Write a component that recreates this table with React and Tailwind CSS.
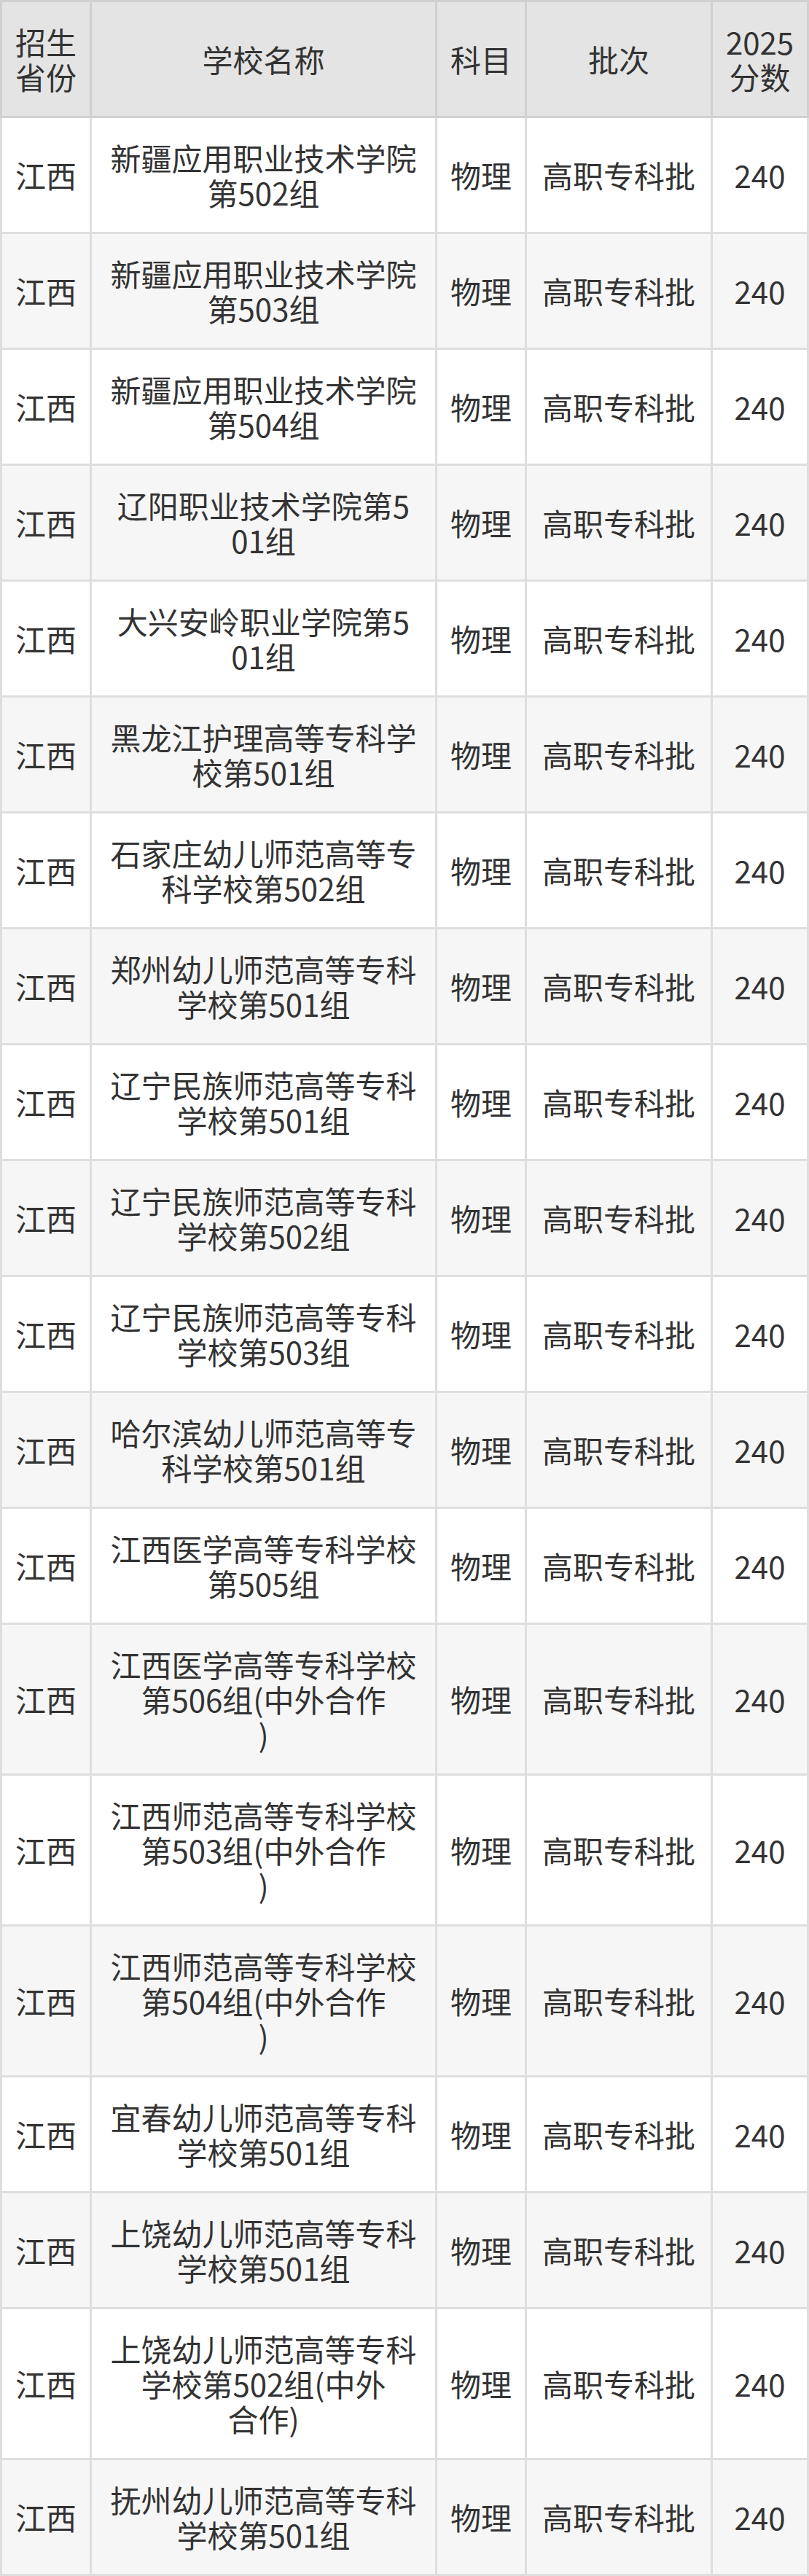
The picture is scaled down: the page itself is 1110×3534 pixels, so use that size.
import React from "react";

// Each school name is split the way it wraps in the narrow column.
const rows = [
  ["新疆应用职业技术学院", "第502组"],
  ["新疆应用职业技术学院", "第503组"],
  ["新疆应用职业技术学院", "第504组"],
  ["辽阳职业技术学院第5", "01组"],
  ["大兴安岭职业学院第5", "01组"],
  ["黑龙江护理高等专科学", "校第501组"],
  ["石家庄幼儿师范高等专", "科学校第502组"],
  ["郑州幼儿师范高等专科", "学校第501组"],
  ["辽宁民族师范高等专科", "学校第501组"],
  ["辽宁民族师范高等专科", "学校第502组"],
  ["辽宁民族师范高等专科", "学校第503组"],
  ["哈尔滨幼儿师范高等专", "科学校第501组"],
  ["江西医学高等专科学校", "第505组"],
  ["江西医学高等专科学校", "第506组(中外合作", ")"],
  ["江西师范高等专科学校", "第503组(中外合作", ")"],
  ["江西师范高等专科学校", "第504组(中外合作", ")"],
  ["宜春幼儿师范高等专科", "学校第501组"],
  ["上饶幼儿师范高等专科", "学校第501组"],
  ["上饶幼儿师范高等专科", "学校第502组(中外", "合作)"],
  ["抚州幼儿师范高等专科", "学校第501组"],
];

const cols = "grid grid-cols-[120px_471px_120px_252px_129px] gap-[3px]";

function Cell({ lines, bg }) {
  return (
    <div
      className={`flex flex-col items-center justify-center whitespace-nowrap py-[30px] text-center ${bg}`}
    >
      {lines.map((l, i) => (
        <div key={i} className="h-[48px]">
          {l}
        </div>
      ))}
    </div>
  );
}

export default function App() {
  return (
    <div className="w-[1110px] bg-white font-['Noto_Sans_CJK_SC','Noto_Sans',sans-serif] text-[42px] leading-[48px] text-[#333333]">
      {/* header */}
      <div className={`${cols} bg-[#d0d0d0] p-[3px]`}>
        <Cell lines={["招生", "省份"]} bg="bg-[#e4e4e4]" />
        <Cell lines={["学校名称"]} bg="bg-[#e4e4e4]" />
        <Cell lines={["科目"]} bg="bg-[#e4e4e4]" />
        <Cell lines={["批次"]} bg="bg-[#e4e4e4]" />
        <Cell lines={["2025", "分数"]} bg="bg-[#e4e4e4]" />
      </div>

      {/* body */}
      <div className={`${cols} bg-[#dedede] px-[3px] pb-[3px]`}>
        {rows.map((name, i) => {
          const bg = i % 2 === 0 ? "bg-white" : "bg-[#f6f6f6]";
          return (
            <React.Fragment key={i}>
              <Cell lines={["江西"]} bg={bg} />
              <Cell lines={name} bg={bg} />
              <Cell lines={["物理"]} bg={bg} />
              <Cell lines={["高职专科批"]} bg={bg} />
              <Cell lines={["240"]} bg={bg} />
            </React.Fragment>
          );
        })}
      </div>
    </div>
  );
}
